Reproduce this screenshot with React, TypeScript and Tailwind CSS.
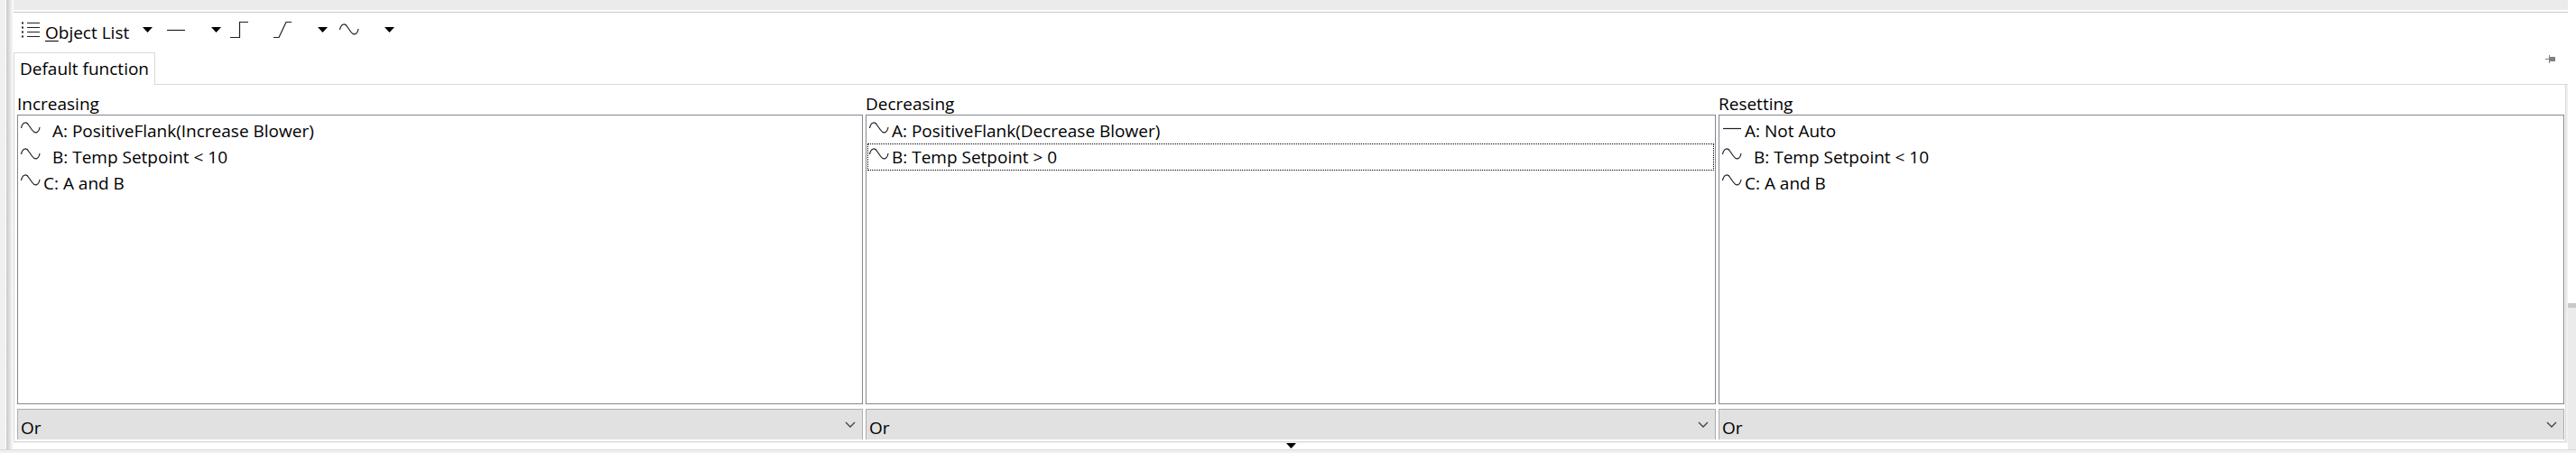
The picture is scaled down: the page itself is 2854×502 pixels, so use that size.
import { ReactNode } from "react";

const ICON_CLASS = "h-6 w-6 shrink-0";

const Wave = () => (
  <svg className={ICON_CLASS} viewBox="0 0 24 24" fill="none" stroke="#202020" strokeWidth="1.2">
    <path d="M1.5 12 C2.5 6 7 3.5 10 9 L13.5 14 C17 19 21 17 22 11" />
  </svg>
);

const Line = () => (
  <svg className={ICON_CLASS} viewBox="0 0 24 24" fill="none" stroke="#202020" strokeWidth="1.2">
    <path d="M2 12.5 H22" />
  </svg>
);

const Step = () => (
  <svg className={ICON_CLASS} viewBox="0 0 24 24" fill="none" stroke="#202020" strokeWidth="1.2">
    <path d="M2 20.5 H12.5 V3.5 H22" />
  </svg>
);

const Ramp = () => (
  <svg className={ICON_CLASS} viewBox="0 0 24 24" fill="none" stroke="#202020" strokeWidth="1.2">
    <path d="M2 20.5 H8 L16 3.5 H22" />
  </svg>
);

const ListIcon = () => (
  <svg className={ICON_CLASS} viewBox="0 0 24 24" fill="none" stroke="#202020" strokeWidth="1.2">
    <path d="M7 4.5 H21 M7 9.5 H21 M7 14.5 H21 M7 19.5 H21" />
    <path d="M1 4.5 H3 M1 9.5 H3 M1 14.5 H3 M1 19.5 H3" strokeWidth="2" />
  </svg>
);

const Arrow = () => (
  <svg className="h-[6px] w-[11px]" viewBox="0 0 11 6">
    <path d="M0 0 H11 L5.5 6 Z" />
  </svg>
);

const icons: Record<string, () => ReactNode> = { wave: Wave, line: Line };

const columns = [
  {
    title: "Increasing",
    rows: [
      { icon: "wave", text: "A: PositiveFlank(Increase Blower)", indent: true },
      { icon: "wave", text: "B: Temp Setpoint < 10", indent: true },
      { icon: "wave", text: "C: A and B" },
    ],
  },
  {
    title: "Decreasing",
    rows: [
      { icon: "wave", text: "A: PositiveFlank(Decrease Blower)" },
      { icon: "wave", text: "B: Temp Setpoint > 0", focused: true },
    ],
  },
  {
    title: "Resetting",
    rows: [
      { icon: "line", text: "A: Not Auto" },
      { icon: "wave", text: "B: Temp Setpoint < 10", indent: true },
      { icon: "wave", text: "C: A and B" },
    ],
  },
];

function Row({ icon, text, indent, focused }: { icon: string; text: string; indent?: boolean; focused?: boolean }) {
  const Icon = icons[icon];
  return (
    <li className={`flex items-start px-px ${focused ? "h-[30px] outline-1 -outline-offset-1 outline-dotted outline-black" : "h-[29px]"}`}>
      <Icon />
      <span className={`leading-[30px] whitespace-nowrap ${indent ? "ml-3" : "ml-0.5"}`}>{text}</span>
    </li>
  );
}

function Column({ title, rows }: (typeof columns)[number]) {
  return (
    <div className="flex min-w-0 flex-col">
      <h2 className="h-6 leading-6">{title}</h2>
      <ul className="flex-1 border border-[#828790] px-px py-[2px]">
        {rows.map((row) => (
          <Row key={row.text} {...row} />
        ))}
      </ul>
      <div className="mt-[5px] grid border border-b-0 border-[#adadad] bg-[#e1e1e1]">
        <select aria-label={`${title} operator`} className="col-start-1 row-start-1 h-[33px] appearance-none pt-1.5 pl-[3px]">
          <option>Or</option>
          <option>And</option>
        </select>
        <svg className="pointer-events-none col-start-1 row-start-1 mt-[13px] mr-[7px] h-[7px] w-3 justify-self-end" viewBox="0 0 12 7" fill="none" stroke="#404040" strokeWidth="1.3">
          <path d="M1 1 L6 6 L11 1" />
        </svg>
      </div>
    </div>
  );
}

export default function App() {
  return (
    <div className="flex h-screen flex-col bg-white font-['Open_Sans','Noto_Sans',sans-serif] text-[19px] text-black">
      <div className="flex min-h-0 flex-1">
        <div className="w-[6px] shrink-0 bg-[#f0f0f0]" />
        <div className="ml-px w-2 shrink-0 bg-linear-to-r from-[#c8c8c8] to-white" />
        <main className="flex min-w-0 flex-1 flex-col">
          <div className="h-[11px] shrink-0 bg-[#ebebeb]" />
          <div className="mt-[2px] flex h-[45px] shrink-0 items-start border-t border-[#c8c8c8] pt-[7px] pl-2">
            <button className="flex h-6 items-center gap-[3px] whitespace-nowrap">
              <ListIcon />
              <span className="pt-1.5 leading-6"><u className="underline-offset-2">O</u>bject List</span>
            </button>
            <button aria-label="Object list menu" className="ml-3 flex h-6 w-4 items-center justify-center"><Arrow /></button>
            <button aria-label="Constant" className="ml-3"><Line /></button>
            <button aria-label="Constant menu" className="ml-6 flex h-6 w-4 items-center justify-center"><Arrow /></button>
            <button aria-label="Step" className="ml-1.5"><Step /></button>
            <button aria-label="Ramp" className="ml-6"><Ramp /></button>
            <button aria-label="Ramp menu" className="ml-6 flex h-6 w-4 items-center justify-center"><Arrow /></button>
            <button aria-label="Curve" className="ml-2.5"><Wave /></button>
            <button aria-label="Curve menu" className="ml-6 flex h-6 w-4 items-center justify-center"><Arrow /></button>
          </div>
          <div className="flex h-9 shrink-0">
            <button className="border border-b-0 border-[#d9d9d9] px-1.5 whitespace-nowrap">Default function</button>
            <div className="flex flex-1 items-start justify-end border-b border-[#d9d9d9] pr-[14px]">
              <button aria-label="Pin" className="mt-[3px]">
                <svg className="h-[9px] w-[11px]" viewBox="0 0 11 9" fill="#808080">
                  <path d="M0 4 H4 V0 H5 V2 H11 V7 H5 V9 H4 V5 H0 Z" />
                </svg>
              </button>
            </div>
          </div>
          <section className="flex min-h-0 flex-1 border-r-2 border-b border-[#f0f0f0]">
            <div className="grid flex-1 grid-cols-[937fr_942fr_937fr] gap-[3px] border-r border-b border-l border-[#d9d9d9] pt-[9px] pr-px pb-[2px] pl-[3px]">
              {columns.map((column) => (
                <Column key={column.title} {...column} />
              ))}
            </div>
          </section>
          <button aria-label="Expand" className="flex h-[7px] shrink-0 justify-center"><Arrow /></button>
        </main>
        <div className="flex w-[9px] shrink-0 flex-col">
          <div className="flex-[336]" />
          <div className="h-[5px] bg-[#c8c8c8]" />
          <div className="flex-[157] bg-[#ebebeb]" />
        </div>
      </div>
      <div className="h-1 shrink-0 border-t border-[#d9d9d9] bg-[#f0f0f0]" />
    </div>
  );
}
